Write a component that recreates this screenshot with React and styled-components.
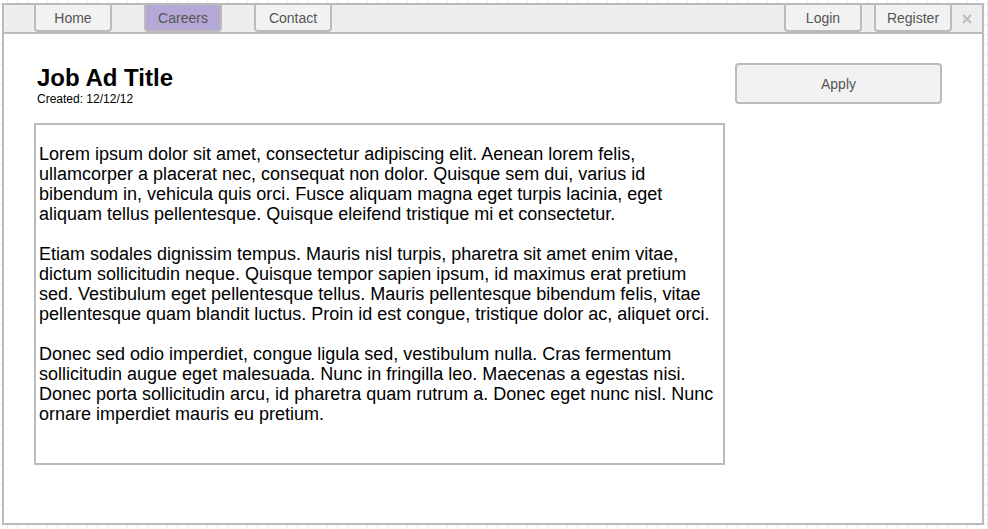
import styled, { createGlobalStyle } from "styled-components";

const GlobalStyle = createGlobalStyle`
  html, body {
    margin: 0;
    padding: 0;
    background-color: #ffffff;
    background-image:
      linear-gradient(to right, #ecebf7 1px, transparent 1px),
      linear-gradient(to bottom, #ecebf7 1px, transparent 1px);
    background-size: 10px 10px;
    background-position: 7px 4px;
    font-family: "Liberation Sans", Arial, sans-serif;
  }
`;

const Frame = styled.div`
  margin: 3px 0 0 2px;
  width: 978px;
  height: 518px;
  border: 2px solid #bbbbbb;
  background: #ffffff;
  display: flex;
  flex-direction: column;
`;

const Toolbar = styled.div`
  height: 27px;
  background: #eeeeee;
  border-bottom: 2px solid #bbbbbb;
  display: flex;
  align-items: stretch;
  padding-left: 30px;
`;

const NavButton = styled.div`
  width: 74px;
  margin-right: ${(p) => p.$gap || 0}px;
  background: ${(p) => (p.$active ? "#b4a8d6" : "#f2f2f2")};
  border: 2px solid #bbbbbb;
  border-top: none;
  border-radius: 0 0 4px 4px;
  display: flex;
  align-items: center;
  justify-content: center;
  font-size: 14px;
  color: #555555;
  box-sizing: content-box;
  height: 25px;
`;

const Spacer = styled.div`
  flex: 1;
`;

const Close = styled.div`
  width: 30px;
  display: flex;
  align-items: center;
  justify-content: center;
`;

const Main = styled.div`
  display: flex;
  gap: 10px;
  padding: 27px 0 0 30px;
`;

const Left = styled.div`
  width: 691px;
`;

const Heading = styled.h1`
  margin: 0 0 0 3px;
  padding-top: 3px;
  font-size: 24px;
  line-height: 28px;
  font-weight: bold;
  color: #000000;
`;

const Created = styled.div`
  margin-left: 3px;
  font-size: 12px;
  line-height: 14px;
  color: #000000;
`;

const TextBox = styled.div`
  margin-top: 17px;
  height: 342px;
  width: 100%;
  box-sizing: border-box;
  border: 2px solid #bbbbbb;
  padding: 19px 5px 0 3px;
`;

const Para = styled.p`
  margin: 0 0 20px;
  font-size: 18px;
  line-height: 20px;
  white-space: nowrap;
  color: #000000;
`;

const ApplyButton = styled.button`
  margin-top: 2px;
  width: 207px;
  height: 41px;
  background: #f2f2f2;
  border: 2px solid #bbbbbb;
  border-radius: 4px;
  font-family: "Liberation Sans", Arial, sans-serif;
  font-size: 14px;
  color: #555555;
`;

export default function App() {
  return (
    <>
      <GlobalStyle />
      <Frame>
        <Toolbar>
          <NavButton $gap={32}>Home</NavButton>
          <NavButton $gap={32} $active>Careers</NavButton>
          <NavButton>Contact</NavButton>
          <Spacer />
          <NavButton $gap={12}>Login</NavButton>
          <NavButton>Register</NavButton>
          <Close>
            <svg width="10" height="10" viewBox="0 0 10 10">
              <path d="M1 1 L9 9 M9 1 L1 9" stroke="#bbbbbb" strokeWidth="2" />
            </svg>
          </Close>
        </Toolbar>
        <Main>
          <Left>
            <Heading>Job Ad Title</Heading>
            <Created>Created: 12/12/12</Created>
            <TextBox>
              <Para>
                Lorem ipsum dolor sit amet, consectetur adipiscing elit. Aenean lorem felis,<br />
                ullamcorper a placerat nec, consequat non dolor. Quisque sem dui, varius id<br />
                bibendum in, vehicula quis orci. Fusce aliquam magna eget turpis lacinia, eget<br />
                aliquam tellus pellentesque. Quisque eleifend tristique mi et consectetur.
              </Para>
              <Para>
                Etiam sodales dignissim tempus. Mauris nisl turpis, pharetra sit amet enim vitae,<br />
                dictum sollicitudin neque. Quisque tempor sapien ipsum, id maximus erat pretium<br />
                sed. Vestibulum eget pellentesque tellus. Mauris pellentesque bibendum felis, vitae<br />
                pellentesque quam blandit luctus. Proin id est congue, tristique dolor ac, aliquet orci.
              </Para>
              <Para>
                Donec sed odio imperdiet, congue ligula sed, vestibulum nulla. Cras fermentum<br />
                sollicitudin augue eget malesuada. Nunc in fringilla leo. Maecenas a egestas nisi.<br />
                Donec porta sollicitudin arcu, id pharetra quam rutrum a. Donec eget nunc nisl. Nunc<br />
                ornare imperdiet mauris eu pretium.
              </Para>
            </TextBox>
          </Left>
          <ApplyButton>Apply</ApplyButton>
        </Main>
      </Frame>
    </>
  );
}
